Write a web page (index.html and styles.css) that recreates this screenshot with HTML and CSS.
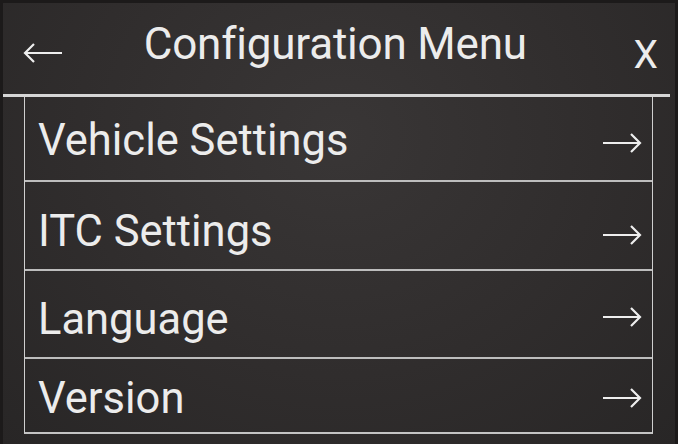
FILE: index.html
```html
<!DOCTYPE html>
<html lang="en">
<head>
    <meta charset="UTF-8">
    <meta name="viewport" content="width=device-width, initial-scale=1.0">
    <title>Configuration Menu</title>
    <link rel="stylesheet" href="styles.css">
</head>
<body>
    <div class="screen">
        <header class="topbar">
            <span class="back">
                <svg width="40" height="22" viewBox="0 0 40 22"><path d="M39 11H2M11 2L2 11L11 20" fill="none" stroke="#eee" stroke-width="2.2"/></svg>
            </span>
            <h1>Configuration Menu</h1>
            <span class="close">X</span>
        </header>

        <ul class="menu">
            <li class="row r1"><span>Vehicle Settings</span><svg class="go" width="40" height="22" viewBox="0 0 40 22"><path d="M1 11H38M29 2L38 11L29 20" fill="none" stroke="#eee" stroke-width="2.2"/></svg></li>
            <li class="row r2"><span>ITC Settings</span><svg class="go" width="40" height="22" viewBox="0 0 40 22"><path d="M1 11H38M29 2L38 11L29 20" fill="none" stroke="#eee" stroke-width="2.2"/></svg></li>
            <li class="row r3"><span>Language</span><svg class="go" width="40" height="22" viewBox="0 0 40 22"><path d="M1 11H38M29 2L38 11L29 20" fill="none" stroke="#eee" stroke-width="2.2"/></svg></li>
            <li class="row r4"><span>Version</span><svg class="go" width="40" height="22" viewBox="0 0 40 22"><path d="M1 11H38M29 2L38 11L29 20" fill="none" stroke="#eee" stroke-width="2.2"/></svg></li>
        </ul>
    </div>
</body>
</html>
```

FILE: styles.css
```css
* {
    box-sizing: border-box;
    margin: 0;
    padding: 0;
    font-family: Roboto, "Liberation Sans", sans-serif;
}

html, body {
    width: 678px;
    height: 444px;
    overflow: hidden;
    background: #1c1a1a;
    color: #ececec;
}

.screen {
    margin: 3px 0 0 3px;
    width: 672px;
    height: 441px;
    background: radial-gradient(ellipse at 50% 30%, #393636 0%, #302d2d 55%, #282626 100%);
    display: flex;
    flex-direction: column;
}

.topbar {
    height: 94px;
    flex-shrink: 0;
    display: flex;
    align-items: center;
    padding: 0 12px 0 20px;
    border-bottom: 3px solid #d6d6d6;
    margin-right: 5px;
}

.back {
    display: flex;
    width: 40px;
    margin-top: 8px;
}

.topbar h1 {
    flex: 1;
    text-align: center;
    font-weight: 400;
    font-size: 44px;
    letter-spacing: -0.2px;
    margin-top: -10px;
    margin-right: 26px;
}

.close {
    font-size: 39px;
    margin-top: 12px;
}

.menu {
    list-style: none;
    margin: 0 22px 0 21px;
    border-left: 1px solid #cfcfcf;
    border-right: 1px solid #cfcfcf;
    border-bottom: 2px solid #c4c4c4;
}

.row {
    display: flex;
    flex-shrink: 0;
    align-items: center;
    justify-content: space-between;
    padding: 0 10px 0 13px;
    font-size: 43.5px;
    border-bottom: 2px solid #bdbdbd;
}

.row:last-child {
    border-bottom: none;
}

.r1 { height: 85px; padding-top: 3px; }
.r2 { height: 89px; padding-top: 12px; }
.r3 { height: 88px; padding-top: 10px; }
.r4 { height: 73px; padding-top: 6px; }

.r1 .go, .r2 .go { margin-top: 6px; }
.r3 .go { margin-top: -4px; }
.r4 .go { margin-top: -2px; }
```
